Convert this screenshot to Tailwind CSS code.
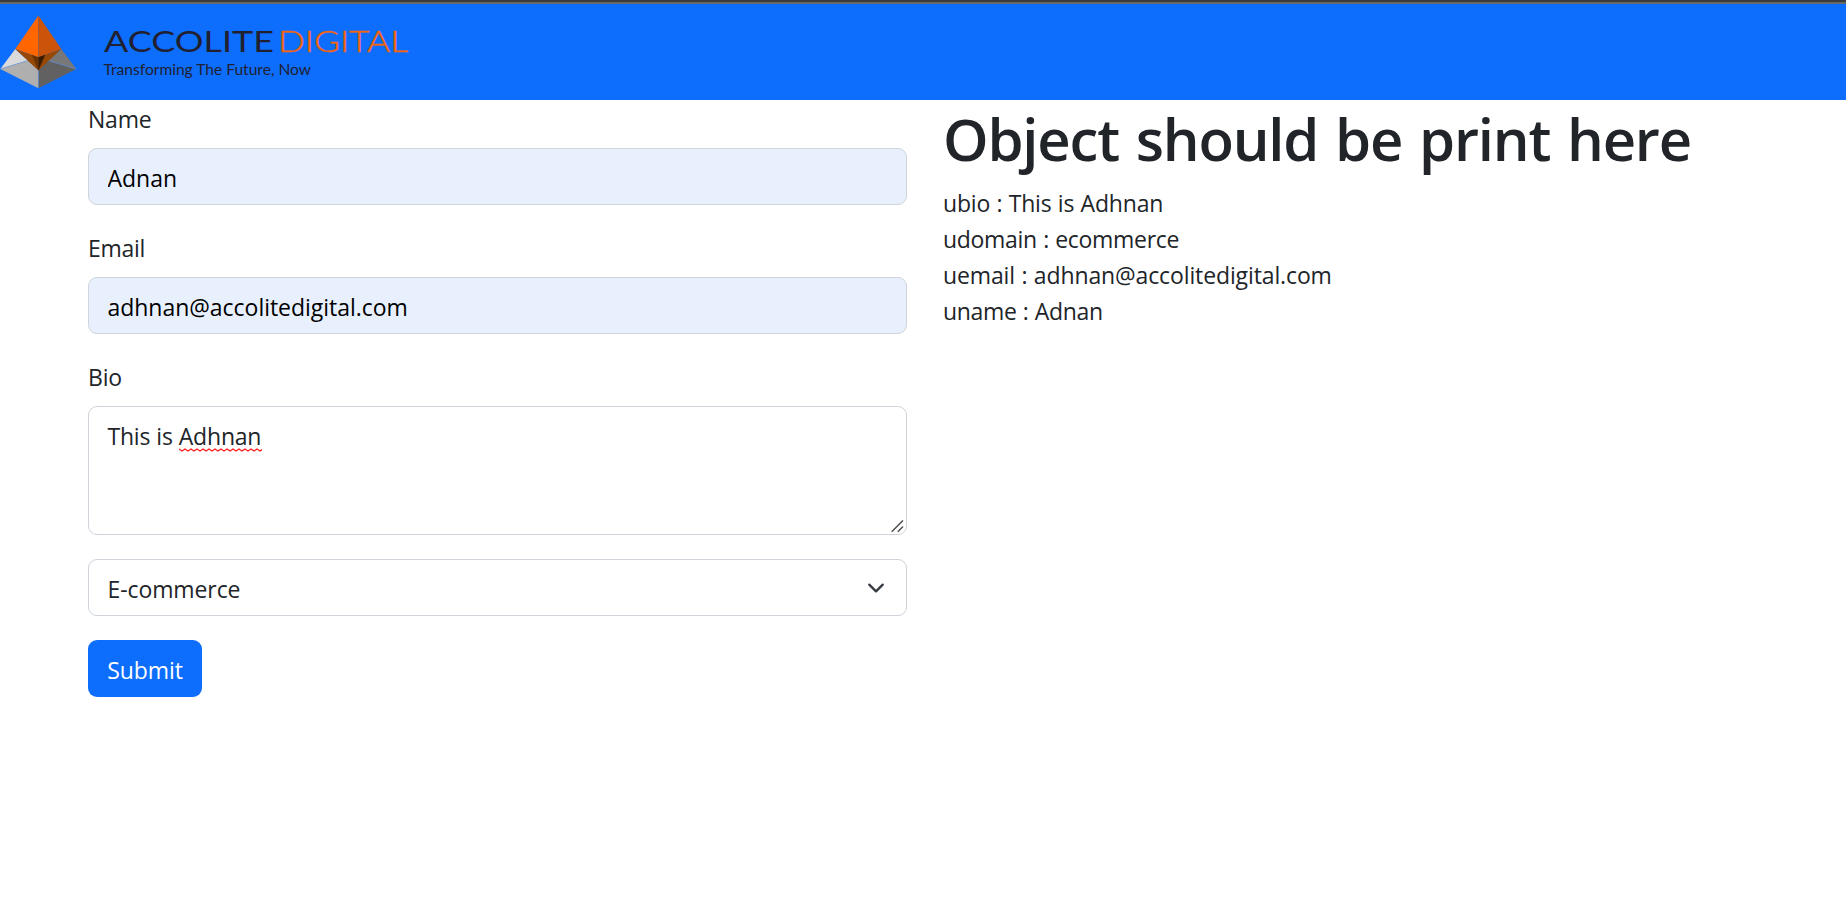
<!DOCTYPE html>
<html lang="en">
<head>
<meta charset="utf-8">
<title>Accolite Digital</title>
<script src="https://cdn.jsdelivr.net/npm/@tailwindcss/browser@4"></script>
</head>
<body class="h-screen overflow-hidden bg-white font-['Open_Sans','Noto_Sans',sans-serif] text-[23px] leading-[36px] text-[#212529]">
<div class="h-0.5 bg-[#3c3c3c]"></div>
<div class="h-0.5 bg-[#686868]"></div>
<nav class="h-24 bg-[#0d6efd]">
  <svg class="block" width="420" height="96" viewBox="0 4 420 96" role="img" aria-label="Accolite Digital">
    <!-- pyramid mark -->
    <path d="M15.3 49 0.3 69 28 60.5Z" fill="#dadada"/>
    <path d="M61.3 49 76.3 69 48 60.5Z" fill="#787878"/>
    <path d="M0.3 69 28 60.5 38.4 70V88.3Z" fill="#afafaf"/>
    <path d="M76.3 69 48 60.5 38.4 70V88.3Z" fill="#616161"/>
    <path d="M0.3 69 28 60.5M76.3 69 48 60.5M38.4 70V88" stroke="#6d9bd8" stroke-width=".6" fill="none"/>
    <path d="M15.3 49 38.4 57V70.5Z" fill="#974804"/>
    <path d="M61.3 49 38.4 57V70.5Z" fill="#974804"/>
    <path d="M31.5 54.5 38.4 57V70.5Z" fill="#6b3404"/>
    <path d="M45.3 54.5 38.4 57V70.5Z" fill="#3b1d05"/>
    <path d="M38.4 15.5 15.3 49 38.4 57Z" fill="#ff6600"/>
    <path d="M38.4 15.5 61.3 49 38.4 57Z" fill="#cb540a"/>
    <!-- wordmark -->
    <g font-family="Lato, sans-serif">
      <text x="104" y="51.5" font-size="29" textLength="170" lengthAdjust="spacingAndGlyphs" fill="#212030">ACCOLITE</text>
      <text x="278" y="51.5" font-size="29" font-weight="300" textLength="130" lengthAdjust="spacingAndGlyphs" fill="#f2650f" stroke="#f2650f" stroke-width=".5">DIGITAL</text>
    </g>
    <text x="103.5" y="74.5" font-family="Lato, sans-serif" font-size="15.3" textLength="207.5" lengthAdjust="spacingAndGlyphs" fill="#212030">Transforming The Future, Now</text>
  </svg>
</nav>
<main class="flex gap-9 pl-[88px]">
  <form class="flex w-[819px] shrink-0 flex-col items-start gap-6">
    <div class="w-full">
      <label class="mb-3 block h-9 pt-px tracking-[-0.2px]" for="n">Name</label>
      <input id="n" class="block h-[57px] w-full rounded-[9px] border border-[#ced4da] bg-[#e8f0fe] pr-[18px] pl-[18.5px] pt-[3px] text-black" value="Adnan">
    </div>
    <div class="w-full">
      <label class="mb-3 block h-9 pt-px tracking-[-0.3px]" for="e">Email</label>
      <input id="e" class="block h-[57px] w-full rounded-[9px] border border-[#ced4da] bg-[#e8f0fe] pr-[18px] pl-[18.5px] pt-[3px] tracking-[-0.03px] text-black" value="adhnan@accolitedigital.com">
    </div>
    <div class="w-full">
      <div class="mb-3 h-9 pt-px tracking-[-0.2px]">Bio</div>
      <div class="flex h-[129px] justify-between rounded-[9px] border border-[#ced4da] pt-[11px] pr-0.5 pb-px pl-[18.5px] tracking-[-0.2px] [word-spacing:0.3px]">
        <div>This is <span class="inline-block">Adhnan<svg class="-mt-[6px] block" width="83" height="4" viewBox="0 0 83 4"><path d="M0 1 3 3 6 1 9 3 12 1 15 3 18 1 21 3 24 1 27 3 30 1 33 3 36 1 39 3 42 1 45 3 48 1 51 3 54 1 57 3 60 1 63 3 66 1 69 3 72 1 75 3 78 1 81 3 83 1.6" fill="none" stroke="#f22" stroke-width="1.4" stroke-linejoin="round"/></svg></span></div>
        <svg class="self-end" width="13" height="13" viewBox="0 0 13 13" fill="none" stroke="#505050" stroke-width="1.5"><path d="M.7 11.7 12 .5M6.8 11.7 12 6.5"/></svg>
      </div>
    </div>
    <div class="flex h-[57px] w-full items-center justify-between rounded-[9px] border border-[#ced4da] pr-[21px] pl-[18.5px] pt-[3px]">
      <span class="tracking-[-0.1px]">E-commerce</span>
      <svg class="-mt-[3px]" width="18" height="18" viewBox="0 0 16 16" fill="none" stroke="#343a40" stroke-width="2" stroke-linecap="round" stroke-linejoin="round"><path d="m2 5 6 6 6-6"/></svg>
    </div>
    <button type="button" class="h-[57px] w-[114px] rounded-[9px] bg-[#0d6efd] pt-[3px] text-white tracking-[-0.1px]">Submit</button>
  </form>
  <section class="whitespace-nowrap">
    <h1 class="mb-[9px] h-[75px] pt-[3px] text-[58px] leading-[72px] font-semibold tracking-[-1.2px] [word-spacing:3px]">Object should be print here</h1>
    <div class="pt-px [word-spacing:0.6px]">
      <p class="tracking-[-0.19px]">ubio : This is Adhnan</p>
      <p class="tracking-[-0.3px]">udomain : ecommerce</p>
      <p class="tracking-[-0.12px]">uemail : adhnan@accolitedigital.com</p>
      <p class="tracking-[-0.32px]">uname : Adnan</p>
    </div>
  </section>
</main>
</body>
</html>
